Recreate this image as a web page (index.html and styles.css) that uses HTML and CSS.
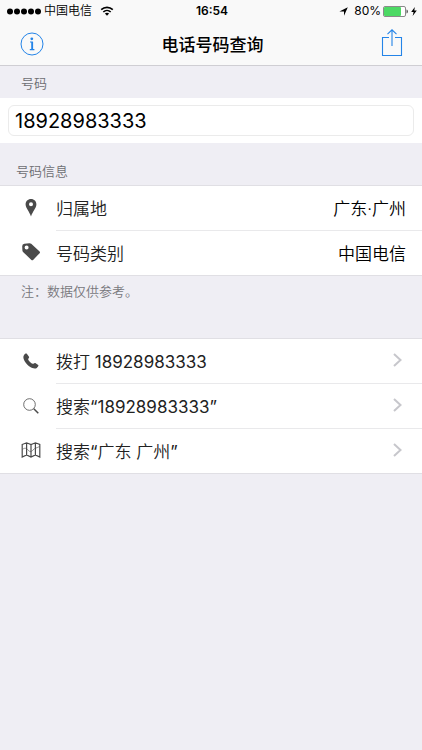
FILE: index.html
```html
<!DOCTYPE html>
<html lang="zh-CN">
<head>
    <meta charset="UTF-8">
    <meta name="viewport" content="width=device-width, initial-scale=1.0">
    <title>电话号码查询</title>
    <link rel="stylesheet" href="styles.css">
</head>
<body>
    <header class="top">
        <!-- Status bar -->
        <div class="status">
            <div class="status-left">
                <svg class="signal" width="35" height="7" viewBox="0 0 35 7">
                    <circle cx="3" cy="3.5" r="3"/>
                    <circle cx="10" cy="3.5" r="3"/>
                    <circle cx="17" cy="3.5" r="3"/>
                    <circle cx="24" cy="3.5" r="3"/>
                    <circle cx="31" cy="3.5" r="3"/>
                </svg>
                <span>中国电信</span>
                <svg class="wifi" width="14" height="10" viewBox="0 0 14 10">
                    <path d="M1.2 3.7C4.5.6 9.5.6 12.8 3.7M3.3 6C5.4 4 8.6 4 10.7 6" fill="none" stroke="#000" stroke-width="1.6"/>
                    <path d="M4.9 7.5C6.1 6.4 7.9 6.4 9.1 7.5L7 9.7Z"/>
                </svg>
            </div>
            <span class="time">16:54</span>
            <div class="status-right">
                <svg width="9" height="9" viewBox="0 0 9 9"><path d="M8.8.2L5 8.8V4.4H.4Z"/></svg>
                <span class="percent">80%</span>
                <svg width="26" height="11" viewBox="0 0 26 11">
                    <rect x=".5" y=".5" width="22" height="10" rx="1.5" fill="#fff" stroke="#8a8a8a"/>
                    <rect x="1" y="1" width="17" height="9" rx="1" fill="#4cd964"/>
                    <path d="M23.5 3.5C25.4 4 25.4 7 23.5 7.5Z" fill="#555"/>
                </svg>
                <svg width="6" height="9" viewBox="0 0 6 9"><path d="M3.8 0L.2 5H2.6L1.6 9L5.8 3.6H3.3Z"/></svg>
            </div>
        </div>

        <!-- Navigation bar -->
        <div class="nav">
            <button class="nav-button" aria-label="关于">
                <svg width="24" height="24" viewBox="0 0 24 24" fill="none" stroke="#2484e8">
                    <circle cx="12" cy="12" r="11"/>
                    <circle cx="11.8" cy="6.8" r="1.4" fill="#2484e8" stroke="none"/>
                    <path d="M10 10H12.3V17.5M9.8 17.6H14.4" stroke-width="1.2"/>
                    <path d="M12.2 10V17.5" stroke-width="1.8"/>
                </svg>
            </button>
            <h1>电话号码查询</h1>
            <button class="nav-button" aria-label="分享">
                <svg width="22" height="29" viewBox="0 0 22 29" fill="none" stroke="#2484e8" stroke-width="1.1">
                    <path d="M8 8.5H1.5V26.5H20.5V8.5H14M11 17V.8M6.5 5.2L11 .8L15.5 5.2"/>
                </svg>
            </button>
        </div>
    </header>

    <main>
        <!-- Number input -->
        <label class="caption caption-indent" for="number">号码</label>
        <div class="field">
            <input type="tel" id="number" value="18928983333">
        </div>

        <!-- Number info -->
        <h2 class="caption">号码信息</h2>
        <ul class="list">
            <li class="row">
                <span class="icon">
                    <svg width="12" height="18" viewBox="0 0 12 18"><path fill-rule="evenodd" d="M6 0C2.8 0 .6 2.3.6 5.4C.6 9 4.6 12.5 6 17.6C7.4 12.5 11.4 9 11.4 5.4C11.4 2.3 9.2 0 6 0ZM6 3.3A2 2 0 1 1 6 7.3A2 2 0 1 1 6 3.3Z"/></svg>
                </span>
                <div class="content">
                    <span>归属地</span>
                    <span class="value">广东·广州</span>
                </div>
            </li>
            <li class="row">
                <span class="icon">
                    <svg width="20" height="20" viewBox="0 0 20 20"><path fill-rule="evenodd" d="M1.2 4.2Q1.2 2 3.4 1.8L8.3 1.2Q9.4 1.1 10.2 1.8L18.6 9.6Q19.4 10.4 18.6 11.2L12.1 17.9Q11.3 18.7 10.4 17.9L2.3 10.2Q1.5 9.4 1.4 8.4ZM5.6 3.4A2 2 0 1 0 5.6 7.4A2 2 0 1 0 5.6 3.4Z"/></svg>
                </span>
                <div class="content">
                    <span>号码类别</span>
                    <span class="value">中国电信</span>
                </div>
            </li>
        </ul>
        <p class="note">注：数据仅供参考。</p>

        <!-- Actions -->
        <ul class="list">
            <li>
                <a class="row" href="#">
                    <span class="icon">
                        <svg width="16" height="16" viewBox="0 0 16 16"><path d="M.9 2.3C1.7.9 3.2.1 4 1L6 3.8C6.6 4.9 5 5.6 5.2 6.4C5.6 7.8 8.2 10.4 9.7 10.8C10.7 11 11.2 9.5 12.3 10L15.2 12C16 12.7 14.8 14.2 13.8 14.9C10.6 16.8 5.4 13.3 2.9 10C.8 7.2-.4 4.4.9 2.3Z"/></svg>
                    </span>
                    <span class="content">
                        <span>拨打 <span class="digits">18928983333</span></span>
                        <svg class="chevron" width="9" height="14" viewBox="0 0 9 14"><path d="M1 1L7.5 7L1 13"/></svg>
                    </span>
                </a>
            </li>
            <li>
                <a class="row" href="#">
                    <span class="icon">
                        <svg width="16" height="16" viewBox="0 0 16 16" fill="none" stroke="#4a4a4a">
                            <circle cx="6.5" cy="6.5" r="5.8" stroke-width=".8"/>
                            <path d="M10.8 10.8L15.3 15.2" stroke-width="1.5"/>
                        </svg>
                    </span>
                    <span class="content">
                        <span>搜索<span class="digits">“18928983333”</span></span>
                        <svg class="chevron" width="9" height="14" viewBox="0 0 9 14"><path d="M1 1L7.5 7L1 13"/></svg>
                    </span>
                </a>
            </li>
            <li>
                <a class="row" href="#">
                    <span class="icon">
                        <svg width="20" height="16" viewBox="0 0 20 16" fill="none" stroke="#4a4a4a" stroke-width="1.2">
                            <path d="M1.2 2.5L5.6.8L10 2.5L14.4.8L18.8 2.5V15L14.4 13L10 15L5.6 13L1.2 15ZM5.6.8V13M10 2.5V15M14.4.8V13"/>
                            <path d="M1.5 7.5C3.5 5.5 5.5 6 7 8S10.5 10 12 8S16 6 18.5 4.5" stroke-width=".6"/>
                        </svg>
                    </span>
                    <span class="content">
                        <span>搜索<span class="digits">“</span>广东 广州<span class="digits">”</span></span>
                        <svg class="chevron" width="9" height="14" viewBox="0 0 9 14"><path d="M1 1L7.5 7L1 13"/></svg>
                    </span>
                </a>
            </li>
        </ul>
    </main>
</body>
</html>
```
FILE: styles.css
```css
/* General Styling */
* {
    box-sizing: border-box;
    margin: 0;
    padding: 0;
}

body {
    background-color: #efeef4;
    color: #222222;
    font-family: Inter, "Noto Sans CJK SC", sans-serif;
    font-size: 17px;
    font-weight: 350;
    min-height: 100vh;
}

svg {
    display: block;
    flex-shrink: 0;
}

/* Header */
.top {
    background-color: #f9f9f9;
    border-bottom: 1px solid #cfced3;
    color: #000000;
}

.status {
    display: grid;
    grid-template-columns: 1fr auto 1fr;
    align-items: center;
    height: 22px;
    padding: 0 5px 0 7px;
    font-size: 12px;
    line-height: 22px;
}

.status-left,
.status-right {
    display: flex;
    align-items: center;
    gap: 2px;
}

.status-right {
    justify-content: flex-end;
}

.wifi {
    margin-left: 6px;
}

.time {
    font-weight: 600;
}

.percent {
    margin-left: 4px;
    font-weight: 400;
}

.nav {
    display: flex;
    align-items: center;
    justify-content: space-between;
    height: 43px;
    padding: 0 19px 0 20px;
}

.nav h1 {
    font-size: 17px;
    font-weight: 500;
}

.nav-button {
    background: none;
    border: none;
    cursor: pointer;
}

/* Captions and notes */
.caption {
    display: block;
    padding: 12px 16px 0;
    height: 42px;
    color: #6d6d72;
    font-size: 13px;
    font-weight: inherit;
    line-height: 32px;
}

.caption-indent {
    height: 32px;
    padding: 0 21px;
    line-height: 34px;
}

.note {
    height: 62px;
    padding: 0 21px;
    color: #77777c;
    font-size: 13px;
    line-height: 30px;
}

/* Number input */
.field {
    padding: 7px 8px;
    background-color: #ffffff;
}

.field input {
    display: block;
    width: 100%;
    height: 31px;
    padding: 0 6px;
    border: 1px solid #ebebeb;
    border-radius: 6px;
    background-color: #ffffff;
    color: #000000;
    font-family: inherit;
    font-size: 20px;
}

/* Lists */
.list {
    list-style: none;
    background-color: #ffffff;
    border-top: 1px solid #e0dfe4;
    border-bottom: 1px solid #e0dfe4;
}

.row {
    display: flex;
    color: inherit;
    text-decoration: none;
}

.icon {
    display: flex;
    align-items: center;
    justify-content: center;
    width: 56px;
    padding: 0 0 2px 5px;
    fill: #4a4a4a;
}

.content {
    display: flex;
    flex: 1;
    align-items: center;
    justify-content: space-between;
    height: 45px;
    padding: 0 16px 2px 0;
    border-bottom: 1px solid #e9e9eb;
}

.list > :last-child .content,
.list > .row:last-child .content {
    height: 44px;
    border-bottom: none;
}

.value {
    color: #000000;
}

.digits {
    font-weight: 400;
}

.chevron {
    margin-right: 4px;
    fill: none;
    stroke: #c7c7cc;
    stroke-width: 2;
}
```
